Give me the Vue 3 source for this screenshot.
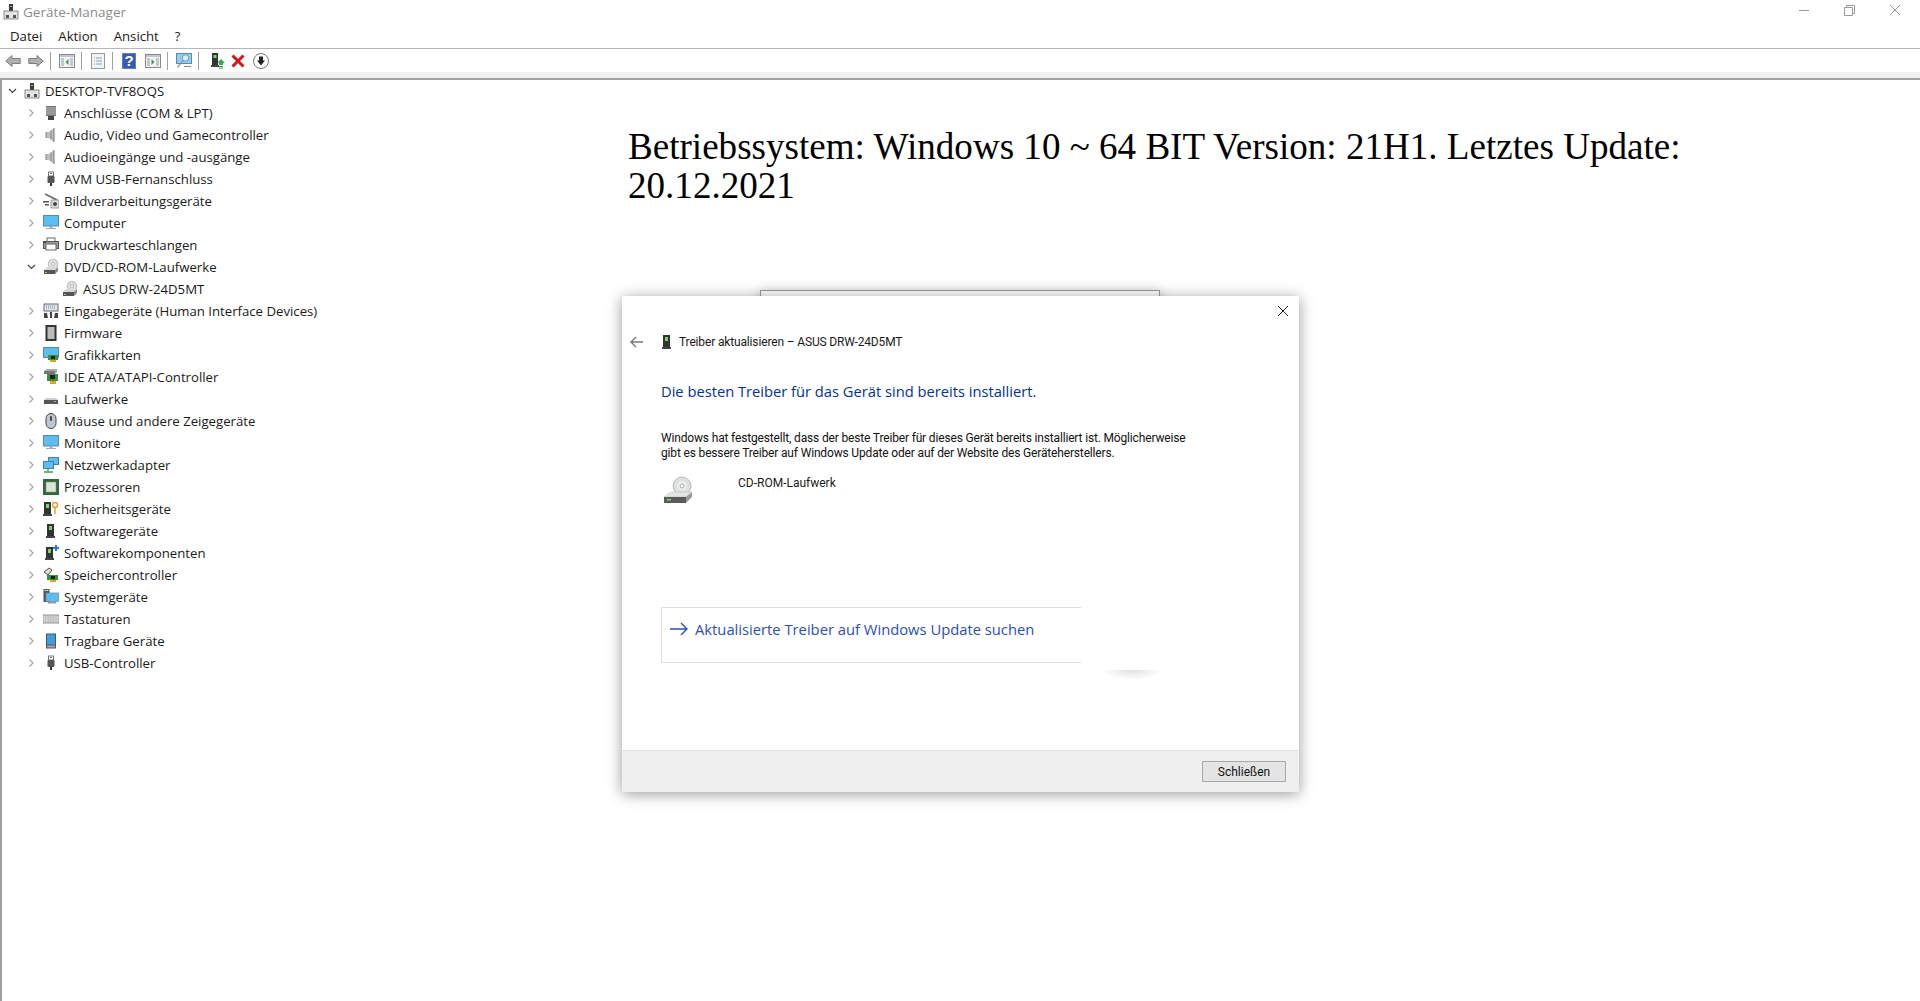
<template>
  <div class="window">
    <svg class="defs" width="0" height="0">
      <defs>
        <symbol id="pc" viewBox="0 0 16 16">
          <rect x="6" y="0" width="4" height="7" fill="#3c3c3c"/><rect x="7" y="2" width="2" height="1" fill="#7fd36b"/>
          <rect x="1" y="7" width="14" height="8" fill="#e2e2e2" stroke="#777" stroke-width=".8"/><rect x="3" y="11" width="3" height="3" fill="#555"/><rect x="10" y="11" width="3" height="3" fill="#555"/>
        </symbol>
        <symbol id="port" viewBox="0 0 16 16">
          <rect x="3" y="1" width="10" height="10" fill="#777"/><path d="M3 3h10M3 5h10M3 7h10M3 9h10" stroke="#bbb"/><rect x="5" y="11" width="6" height="4" fill="#444"/>
        </symbol>
        <symbol id="speaker" viewBox="0 0 16 16">
          <path d="M3 5h3l5-4v14l-5-4H3z" fill="#bdbdbd"/><path d="M3 5v6" stroke="#888"/><path d="M8 3.500v9" stroke="#8a8a8a"/><path d="M11 1v14" stroke="#777"/>
        </symbol>
        <symbol id="usb" viewBox="0 0 16 16">
          <rect x="5.500" y="1" width="5" height="4" fill="#fff" stroke="#777"/><path d="M7 2.500h2" stroke="#777"/><rect x="4.500" y="5" width="7" height="7" rx="1" fill="#555"/><rect x="7" y="12" width="2" height="3" fill="#333"/>
        </symbol>
        <symbol id="imaging" viewBox="0 0 16 16">
          <path d="M2 1l12 6" stroke="#666" stroke-width="1.400"/><path d="M0 8h6v1.500H0zM2 11h4v1.500H2z" fill="#555"/><rect x="8" y="7" width="8" height="8" fill="#ddd" stroke="#777" stroke-width=".7"/><circle cx="12" cy="11" r="2" fill="#444"/>
        </symbol>
        <symbol id="monitor" viewBox="0 0 16 16">
          <rect x=".5" y=".5" width="15" height="10.500" fill="#5cbdf0" stroke="#5b8aa6"/><rect x="6.500" y="11" width="3" height="2" fill="#aab"/><rect x="3" y="13" width="10" height="1" fill="#aaa"/>
        </symbol>
        <symbol id="printer" viewBox="0 0 16 16">
          <rect x="4" y="1" width="8" height="4" fill="#fff" stroke="#666"/><rect x=".5" y="4.500" width="15" height="7" fill="#9b9b9b" stroke="#555"/><rect x="3" y="7" width="10" height="6" fill="#fff" stroke="#666"/><rect x="1" y="5" width="2" height="1" fill="#333"/>
        </symbol>
        <symbol id="cd" viewBox="0 0 16 16">
          <circle cx="10" cy="5" r="4.800" fill="#dedede" stroke="#a8a8a8" stroke-width=".7"/><circle cx="10" cy="5" r="1.500" fill="#fff" stroke="#999" stroke-width=".6"/>
          <path d="M1 11l3-3h11l-3 3z" fill="#d8d8d8"/><rect x="1" y="11" width="11" height="4" fill="#555"/><path d="M12 11l3-3v4l-3 3z" fill="#888"/><rect x="2" y="13" width="2" height="1" fill="#7fd36b"/>
        </symbol>
        <symbol id="hid" viewBox="0 0 16 16">
          <rect x="1" y="1" width="14" height="7" fill="#e6e6e6" stroke="#667"/><path d="M3 3h10M3 5h10" stroke="#68a" stroke-dasharray="1 1"/><path d="M1 15V10h3l1 5zM7 15V9h2v6zM11 15l1-5h3v5z" fill="#444"/>
        </symbol>
        <symbol id="chip" viewBox="0 0 16 16">
          <rect x="2.500" y="0" width="11" height="16" fill="#333"/><rect x="4.500" y="2" width="7" height="12" fill="#bbb"/><path d="M2 2h1M2 5h1M2 8h1M2 11h1M2 14h1M13 2h1M13 5h1M13 8h1M13 11h1M13 14h1" stroke="#888"/>
        </symbol>
        <symbol id="gpu" viewBox="0 0 16 16">
          <rect x=".5" y=".5" width="15" height="10" fill="#5cbdf0" stroke="#5b8aa6"/><rect x="5" y="8" width="10" height="5" fill="#3f8f3f"/><rect x="8" y="9" width="4" height="3" fill="#222"/><rect x="7" y="13" width="6" height="2" fill="#d2a928"/>
        </symbol>
        <symbol id="ide" viewBox="0 0 16 16">
          <path d="M1 2l3-2h10v3l-2 2H1z" fill="#aaa"/><rect x="1" y="2" width="11" height="3" fill="#777"/><rect x="4" y="5" width="11" height="7" fill="#3f8f3f"/><rect x="7" y="6" width="5" height="4" fill="#222"/><rect x="7" y="12" width="6" height="3" fill="#d2a928"/>
        </symbol>
        <symbol id="drive" viewBox="0 0 16 16">
          <path d="M1 9l2-2h10l2 2z" fill="#ccc"/><rect x="1" y="9" width="14" height="4" fill="#555"/><rect x="11" y="10" width="2" height="1" fill="#7fd36b"/>
        </symbol>
        <symbol id="mouse" viewBox="0 0 16 16">
          <rect x="3" y="0.500" width="10" height="15" rx="5" fill="#bfc6cf" stroke="#444"/><rect x="7" y="3" width="2" height="5" rx="1" fill="#445"/>
        </symbol>
        <symbol id="net" viewBox="0 0 16 16">
          <rect x="5.500" y=".5" width="10" height="7" fill="#5cbdf0" stroke="#4a7fa5"/><rect x=".5" y="4.500" width="10" height="7" fill="#5cbdf0" stroke="#4a7fa5"/><path d="M5 12v2M1 15h9" stroke="#3aa53a" stroke-width="1.500"/>
        </symbol>
        <symbol id="cpu" viewBox="0 0 16 16">
          <rect x=".5" y=".5" width="15" height="15" fill="#2f6b3a" stroke="#2f6b3a"/><rect x="3" y="3" width="10" height="10" fill="#dfe3d8" stroke="#888" stroke-width=".5"/>
        </symbol>
        <symbol id="tower" viewBox="0 0 16 16">
          <rect x="4" y="1" width="7" height="12" fill="#333"/><rect x="6" y="3" width="3" height="4" fill="#7fd36b"/><rect x="3" y="13" width="9" height="2" fill="#444"/>
        </symbol>
        <symbol id="sec" viewBox="0 0 16 16">
          <rect x="1" y="1" width="7" height="12" fill="#333"/><rect x="3" y="3" width="3" height="4" fill="#7fd36b"/><rect x="0" y="13" width="9" height="2" fill="#444"/><circle cx="12" cy="4" r="2.500" fill="none" stroke="#d8a62c" stroke-width="1.500"/><path d="M12 6.500V13" stroke="#d8a62c" stroke-width="1.500"/>
        </symbol>
        <symbol id="soft" viewBox="0 0 16 16">
          <rect x="3" y="2" width="7" height="11" fill="#333"/><rect x="5" y="4" width="3" height="4" fill="#7fd36b"/><rect x="2" y="13" width="9" height="2" fill="#444"/><path d="M12 0h2v2h2v2h-2v2h-2V4h-2V2h2z" fill="#2b7cd3"/>
        </symbol>
        <symbol id="store" viewBox="0 0 16 16">
          <path d="M1 5l5-4 3 2-4 5z" fill="#ddd" stroke="#555"/><rect x="4" y="8" width="11" height="5" fill="#3f8f3f"/><rect x="8" y="9" width="4" height="3" fill="#222"/><rect x="7" y="13" width="6" height="2" fill="#d2a928"/>
        </symbol>
        <symbol id="sys" viewBox="0 0 16 16">
          <rect x=".5" y="0" width="6" height="13" fill="#555"/><rect x="1.500" y="1" width="4" height="1" fill="#ccc"/><rect x="3" y="4" width="12.500" height="8.500" fill="#5cbdf0" stroke="#5b8aa6" stroke-width=".7"/><rect x="5" y="13" width="8" height="1.500" fill="#999"/>
        </symbol>
        <symbol id="kbd" viewBox="0 0 16 16">
          <rect x="0" y="4" width="16" height="8" fill="#ddd" stroke="#666" stroke-width=".7"/><path d="M2 6h12M2 8h12M2 10h12" stroke="#999" stroke-dasharray="1 .6"/>
        </symbol>
        <symbol id="tablet" viewBox="0 0 16 16">
          <rect x="3" y="0.500" width="10" height="15" fill="#555"/><rect x="4" y="1.500" width="8" height="10" fill="#3f9ee0"/><rect x="4" y="12.500" width="8" height="2" fill="#aaa"/>
        </symbol>
      </defs>
    </svg>

    <header class="titlebar">
      <div class="title">
        <svg class="ico"><use href="#pc"/></svg>
        <span>Geräte-Manager</span>
      </div>
      <div class="caption">
        <svg width="46" height="24" viewBox="0 0 46 24"><path d="M17 10.500h10" stroke="#999"/></svg>
        <svg width="46" height="24" viewBox="0 0 46 24"><path d="M18.500 7.500V5.500h8v8h-2M16.500 7.500h8v8h-8z" fill="none" stroke="#999"/></svg>
        <svg width="46" height="24" viewBox="0 0 46 24"><path d="M16 5l10 10M26 5L16 15" stroke="#999"/></svg>
      </div>
    </header>

    <nav class="menubar">
      <span v-for="m in menus" :key="m">{{ m }}</span>
    </nav>

    <div class="toolbar">
      <svg width="16" height="16" viewBox="0 0 16 16"><path d="M.8 8L7 2.500V5.500h8.200v5H7v3z" fill="#b0b0b0" stroke="#7d7d7d"/></svg>
      <svg class="next" width="16" height="16" viewBox="0 0 16 16"><path d="M15.200 8L9 2.500V5.500H.8v5H9v3z" fill="#b0b0b0" stroke="#7d7d7d"/></svg>
      <i class="sep"></i>
      <svg width="16" height="16" viewBox="0 0 16 16"><rect x=".5" y="1.500" width="15" height="13" fill="#f4f4f4" stroke="#888"/><rect x="1" y="2" width="14" height="2" fill="#bfc9d2"/><path d="M2 6h3M2 8h3M2 10h3M2 12h3M11 6h3M11 8h3M11 10h3M11 12h3" stroke="#8fa0ad"/><path d="M9.500 6v6L6.500 9z" fill="#3f9c4a"/></svg>
      <i class="sep"></i>
      <svg width="16" height="16" viewBox="0 0 16 16"><rect x="1.500" y=".5" width="13" height="15" fill="#f4f4f4" stroke="#999"/><path d="M4 5h1M6 5h6M4 8h1M6 8h6M4 11h1M6 11h6" stroke="#8f9aa5"/><path d="M5 15.500h6" stroke="#4eb2ea"/></svg>
      <i class="sep"></i>
      <svg class="help" width="14" height="16" viewBox="0 0 14 16"><rect width="14" height="16" fill="#3658b8"/><rect x=".5" y=".5" width="13" height="15" fill="none" stroke="#7f97dc" stroke-width=".6"/><text x="7" y="13" text-anchor="middle" class="qm">?</text></svg>
      <svg class="gap-9" width="16" height="16" viewBox="0 0 16 16"><rect x=".5" y="1.500" width="15" height="13" fill="#f4f4f4" stroke="#888"/><rect x="1" y="2" width="14" height="2" fill="#bfc9d2"/><path d="M2 6h3M2 8h3M2 10h3M2 12h3M11 6h3M11 8h3M11 10h3M11 12h3" stroke="#8fa0ad"/><path d="M6.500 6v6l3-3z" fill="#3f9c4a"/></svg>
      <i class="sep"></i>
      <svg width="16" height="16" viewBox="0 0 16 16"><rect x=".5" y=".5" width="15" height="10" fill="#8fcdf0" stroke="#5a8ba8"/><circle cx="9.500" cy="5" r="3.200" fill="#d8ecf7" stroke="#5a8ba8" stroke-width=".8"/><path d="M7 7.500L2 14h-1M8 13.500h7" stroke="#888" fill="none" stroke-width="1.200"/></svg>
      <i class="sep last"></i>
      <svg width="16" height="16" viewBox="0 0 16 16"><rect x="2" y="0" width="6" height="12" fill="#333"/><rect x="3.500" y="2" width="3" height="3" fill="#7fd36b"/><rect x="1" y="12" width="8" height="2" fill="#444"/><path d="M11 6l4 4h-2v2H9v-2H7z" fill="#36a852"/><path d="M9 13.500h4M9 15h4" stroke="#36a852"/></svg>
      <svg class="gap-5" width="14" height="14" viewBox="0 0 14 14"><path d="M1.500 1.500l11 11M12.500 1.500l-11 11" stroke="#d4141c" stroke-width="3"/></svg>
      <svg class="gap-8" width="16" height="16" viewBox="0 0 16 16"><circle cx="8" cy="8" r="7.500" fill="#fff" stroke="#777"/><path d="M6 3.500h4v4h2L8 12.500 4 7.500h2z" fill="#222"/></svg>
    </div>
    <div class="band"></div>

    <main class="content">
      <ul class="tree">
        <li v-for="row in rows" :key="row.label" class="row" :class="'depth' + row.depth">
          <svg class="chev" width="13" height="12" viewBox="0 0 13 12">
            <path v-if="row.open === true" d="M3 4l3.500 3.500L10 4" fill="none" stroke="#444" stroke-width="1.200"/>
            <path v-else-if="row.open === false" d="M4.500 2.500L8 6 4.500 9.500" fill="none" stroke="#a6a6a6" stroke-width="1.200"/>
          </svg>
          <svg class="ico"><use :href="'#' + row.icon"/></svg>
          <span>{{ row.label }}</span>
        </li>
      </ul>
      <h1 class="headline">Betriebssystem: Windows 10 ~ 64 BIT Version: 21H1. Letztes Update: 20.12.2021</h1>
    </main>

    <div class="behind"></div>

    <section class="dialog">
      <svg class="close" width="12" height="12" viewBox="0 0 12 12"><path d="M1 1l10 10M11 1L1 11" stroke="#222" stroke-width="1"/></svg>
      <div class="dlg-body">
        <div class="dlg-title">
          <svg width="14" height="12" viewBox="0 0 14 12"><path d="M1 6h12M6 1L1 6l5 5" fill="none" stroke="#777" stroke-width="1.400"/></svg>
          <svg class="ico small" viewBox="3 0 9 16"><use href="#tower" width="16" height="16"/></svg>
          <span>Treiber aktualisieren – ASUS DRW-24D5MT</span>
        </div>
        <h2>Die besten Treiber für das Gerät sind bereits installiert.</h2>
        <p>Windows hat festgestellt, dass der beste Treiber für dieses Gerät bereits installiert ist. Möglicherweise<br>gibt es bessere Treiber auf Windows Update oder auf der Website des Geräteherstellers.</p>
        <div class="device">
          <svg width="30" height="28" viewBox="0 0 30 28">
            <circle cx="19" cy="10" r="9" fill="#dcdfe0" stroke="#a9adaf" stroke-width=".8"/>
            <circle cx="19" cy="10" r="5" fill="#eceeee"/>
            <circle cx="19" cy="10" r="2" fill="#fff" stroke="#9a9a9a" stroke-width=".8"/>
            <path d="M1 21l7-5h21l-6 5z" fill="#e4e4e4" stroke="#bbb" stroke-width=".5"/>
            <rect x="1" y="21" width="22" height="6" fill="#5a5a5a"/>
            <path d="M23 21l6-5v5l-6 6z" fill="#9a9a9a"/>
            <rect x="4" y="23" width="4" height="1.500" fill="#7fd36b"/>
          </svg>
          <span>CD-ROM-Laufwerk</span>
        </div>
        <div class="cmd">
          <svg width="18" height="14" viewBox="0 0 18 14"><path d="M0 7h17M11 1l6 6-6 6" fill="none" stroke="#2a4fb5" stroke-width="1.400"/></svg>
          <span>Aktualisierte Treiber auf Windows Update suchen</span>
        </div>
        <div class="blob"></div>
      </div>
      <footer class="dlg-foot">
        <button>Schließen</button>
      </footer>
    </section>
  </div>
</template>

<script setup>
const menus = ['Datei', 'Aktion', 'Ansicht', '?']

const rows = [
  { label: 'DESKTOP-TVF8OQS', icon: 'pc', depth: 0, open: true },
  { label: 'Anschlüsse (COM & LPT)', icon: 'port', depth: 1, open: false },
  { label: 'Audio, Video und Gamecontroller', icon: 'speaker', depth: 1, open: false },
  { label: 'Audioeingänge und -ausgänge', icon: 'speaker', depth: 1, open: false },
  { label: 'AVM USB-Fernanschluss', icon: 'usb', depth: 1, open: false },
  { label: 'Bildverarbeitungsgeräte', icon: 'imaging', depth: 1, open: false },
  { label: 'Computer', icon: 'monitor', depth: 1, open: false },
  { label: 'Druckwarteschlangen', icon: 'printer', depth: 1, open: false },
  { label: 'DVD/CD-ROM-Laufwerke', icon: 'cd', depth: 1, open: true },
  { label: 'ASUS DRW-24D5MT', icon: 'cd', depth: 2, open: null },
  { label: 'Eingabegeräte (Human Interface Devices)', icon: 'hid', depth: 1, open: false },
  { label: 'Firmware', icon: 'chip', depth: 1, open: false },
  { label: 'Grafikkarten', icon: 'gpu', depth: 1, open: false },
  { label: 'IDE ATA/ATAPI-Controller', icon: 'ide', depth: 1, open: false },
  { label: 'Laufwerke', icon: 'drive', depth: 1, open: false },
  { label: 'Mäuse und andere Zeigegeräte', icon: 'mouse', depth: 1, open: false },
  { label: 'Monitore', icon: 'monitor', depth: 1, open: false },
  { label: 'Netzwerkadapter', icon: 'net', depth: 1, open: false },
  { label: 'Prozessoren', icon: 'cpu', depth: 1, open: false },
  { label: 'Sicherheitsgeräte', icon: 'sec', depth: 1, open: false },
  { label: 'Softwaregeräte', icon: 'tower', depth: 1, open: false },
  { label: 'Softwarekomponenten', icon: 'soft', depth: 1, open: false },
  { label: 'Speichercontroller', icon: 'store', depth: 1, open: false },
  { label: 'Systemgeräte', icon: 'sys', depth: 1, open: false },
  { label: 'Tastaturen', icon: 'kbd', depth: 1, open: false },
  { label: 'Tragbare Geräte', icon: 'tablet', depth: 1, open: false },
  { label: 'USB-Controller', icon: 'usb', depth: 1, open: false }
]
</script>

<style>
html, body {
  margin: 0;
  height: 100%;
  overflow: hidden;
  background: #fff;
}
</style>

<style scoped>
.window {
  position: relative;
  height: 1001px;
  display: flex;
  flex-direction: column;
  font-family: "Open Sans", "Noto Sans", sans-serif;
  font-size: 13.2px;
  color: #1a1a1a;
  overflow: hidden;
}
.defs {
  position: absolute;
}
.ico {
  width: 16px;
  height: 16px;
  flex: none;
}
.titlebar {
  height: 24px;
  display: flex;
  justify-content: space-between;
}
.title {
  display: flex;
  align-items: center;
  gap: 4px;
  padding-left: 3px;
  color: #8c8c8c;
  font-size: 13.5px;
}
.caption {
  display: flex;
}
.menubar {
  height: 24px;
  display: flex;
  align-items: center;
  gap: 16px;
  padding-left: 10px;
  border-bottom: 1px solid #b5b5bd;
}
.toolbar {
  height: 23px;
  display: flex;
  align-items: center;
  padding-left: 5px;
}
.toolbar svg {
  flex: none;
}
.next {
  margin-left: 7px;
}
.sep {
  width: 1px;
  height: 18px;
  background: #a0a0a0;
  margin: 0 8px 0 6px;
  flex: none;
}
.sep.last { margin-right: 11px; }
.help { margin-left: 1px; }
.gap-9 { margin-left: 9px; }
.gap-5 { margin-left: 5px; }
.gap-8 { margin-left: 8px; }
.qm {
  font-family: "Liberation Sans", sans-serif;
  font-size: 15px;
  font-weight: 700;
  fill: #fff;
}
.band {
  height: 6px;
  background: #f0f0f0;
}
.content {
  flex: 1;
  display: flex;
  border-top: 2px solid #a0a0a0;
  border-left: 2px solid #a0a0a0;
}
.tree {
  list-style: none;
  margin: 0;
  padding: 0;
  width: 626px;
}
.row {
  height: 22px;
  display: flex;
  align-items: center;
  white-space: nowrap;
}
.chev {
  flex: none;
  margin-right: 5px;
}
.row .ico {
  margin-right: 5px;
}
.depth0 { padding-left: 4px; }
.depth1 { padding-left: 23px; }
.depth2 { padding-left: 42px; }
.headline {
  flex: 1;
  margin: 47px 200px 0 0;
  font-family: "Liberation Serif", serif;
  font-weight: 400;
  font-size: 37.1px;
  line-height: 39px;
  color: #000;
}
.behind {
  position: absolute;
  left: 760px;
  top: 290px;
  width: 398px;
  height: 20px;
  background: #fff;
  border: 1px solid #9a9a9a;
  box-shadow: 0 0 12px rgba(0, 0, 0, .18);
}
.dialog {
  position: absolute;
  left: 622px;
  top: 296px;
  width: 677px;
  height: 496px;
  background: #fff;
  display: flex;
  flex-direction: column;
  box-shadow: 0 2px 14px rgba(0, 0, 0, .4);
}
.close {
  position: absolute;
  right: 10px;
  top: 9px;
}
.dlg-body {
  position: relative;
  flex: 1;
  padding: 39px 0 0 39px;
  font-family: Roboto, "Open Sans", sans-serif;
  font-size: 12px;
}
.dlg-title {
  display: flex;
  align-items: center;
  height: 14px;
  margin-left: -31px;
  letter-spacing: -.15px;
}
.dlg-title .small {
  width: 9px;
  margin: 0 8px 0 18px;
}
.dlg-body h2 {
  margin: 32px 0 0;
  font-family: "Open Sans", sans-serif;
  font-size: 14.7px;
  font-weight: 400;
  line-height: 20px;
  color: #003399;
}
.dlg-body p {
  margin: 30px 0 0;
  line-height: 15px;
  color: #111;
  letter-spacing: -.16px;
}
.device {
  margin-top: 15px;
  display: flex;
  align-items: flex-start;
  gap: 45px;
  height: 131px;
}
.device svg {
  margin-left: 2px;
}
.cmd {
  width: 420px;
  height: 56px;
  box-sizing: border-box;
  border: 1px solid #e0e0e0;
  border-right: none;
  padding: 11px 0 0 8px;
  display: flex;
  align-items: flex-start;
  gap: 7px;
  font-family: "Open Sans", sans-serif;
  font-size: 14.75px;
  line-height: 20px;
  color: #2a4fb5;
}
.cmd svg {
  margin-top: 3px;
}
.blob {
  position: absolute;
  left: 480px;
  top: 374px;
  width: 60px;
  height: 10px;
  background: radial-gradient(ellipse at top, rgba(0, 0, 0, .12), rgba(0, 0, 0, 0) 70%);
}
.dlg-foot {
  height: 42px;
  box-sizing: border-box;
  background: #efefef;
  border-top: 1px solid #dfdfdf;
  display: flex;
  justify-content: flex-end;
  align-items: center;
  padding: 0 13px 0 0;
}
.dlg-foot button {
  width: 84px;
  height: 21px;
  background: #e4e4e4;
  border: 1px solid #a8a8a8;
  font-family: Roboto, sans-serif;
  font-size: 12px;
  color: #111;
  padding: 0;
}
</style>
